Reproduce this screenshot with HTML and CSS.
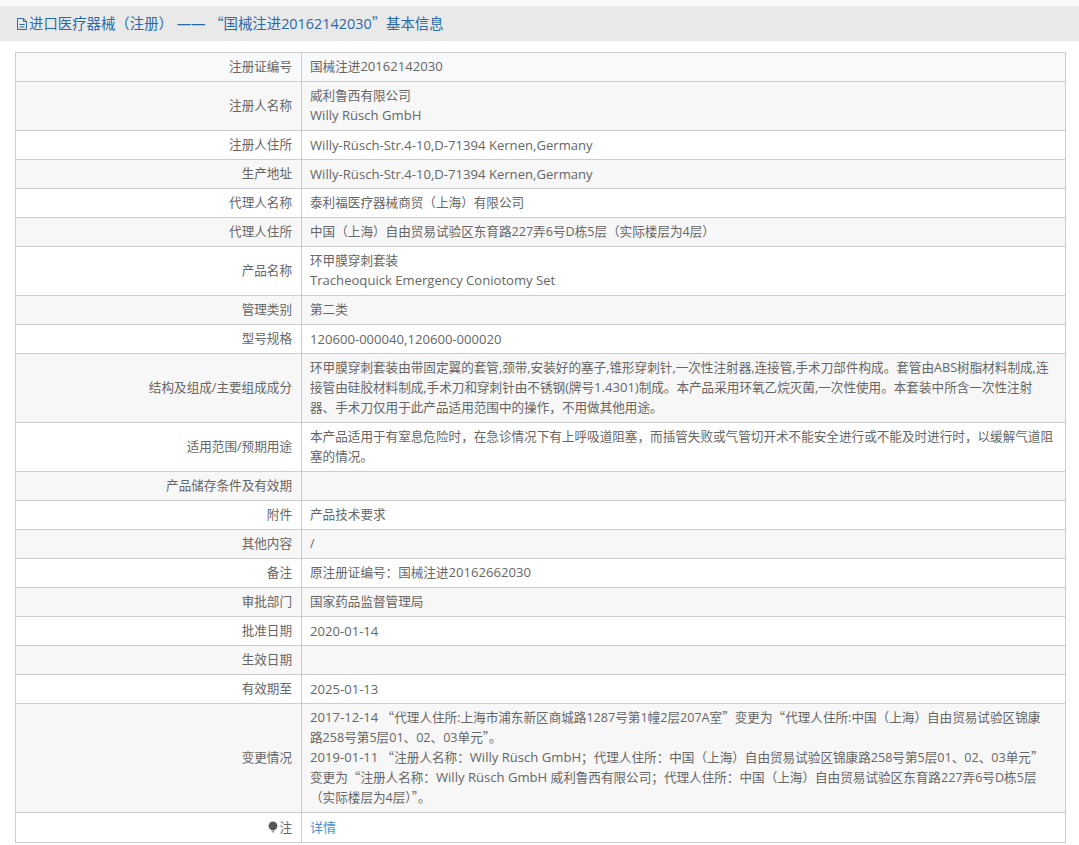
FILE: index.html
```html
<!DOCTYPE html>
<html lang="zh-CN">
<head>
    <meta charset="UTF-8">
    <title>进口医疗器械（注册）基本信息</title>
    <link rel="stylesheet" href="styles.css">
</head>
<body>

<!-- Title bar -->
<div class="pageTitle">
    <svg class="fileIcon" width="12" height="14" viewBox="0 0 12 14" fill="none" stroke="currentColor" stroke-width="1">
        <path d="M1.5 1.5h6l3 3v8h-9z"/>
        <path d="M7.5 1.5v3h3M3.5 7.5h5M3.5 10h5"/>
    </svg>
    <span>进口医疗器械（注册） —— <span class="cjk">“</span>国械注进20162142030<span class="cjk">”</span>基本信息</span>
</div>

<!-- Detail table -->
<table class="detailTable">
    <tr class="firstRow"><th>注册证编号</th><td>国械注进<span class="en">20162142030</span></td></tr>
    <tr><th>注册人名称</th><td>威利鲁西有限公司<br><span class="en">Willy Rüsch GmbH</span></td></tr>
    <tr><th>注册人住所</th><td class="en">Willy-Rüsch-Str.4-10,D-71394 Kernen,Germany</td></tr>
    <tr><th>生产地址</th><td class="en">Willy-Rüsch-Str.4-10,D-71394 Kernen,Germany</td></tr>
    <tr><th>代理人名称</th><td>泰利福医疗器械商贸（上海）有限公司</td></tr>
    <tr><th>代理人住所</th><td>中国（上海）自由贸易试验区东育路227弄6号D栋5层（实际楼层为4层）</td></tr>
    <tr><th>产品名称</th><td>环甲膜穿刺套装<br><span class="en">Tracheoquick Emergency Coniotomy Set</span></td></tr>
    <tr><th>管理类别</th><td>第二类</td></tr>
    <tr><th>型号规格</th><td class="en">120600-000040,120600-000020</td></tr>
    <tr><th>结构及组成/主要组成成分</th><td>环甲膜穿刺套装由带固定翼的套管,颈带,安装好的塞子,锥形穿刺针,一次性注射器,连接管,手术刀部件构成。套管由ABS树脂材料制成,连接管由硅胶材料制成,手术刀和穿刺针由不锈钢(牌号<span class="en">1.4301</span>)制成。本产品采用环氧乙烷灭菌,一次性使用。本套装中所含一次性注射<br>器、手术刀仅用于此产品适用范围中的操作，不用做其他用途。</td></tr>
    <tr><th>适用范围/预期用途</th><td>本产品适用于有窒息危险时，在急诊情况下有上呼吸道阻塞，而插管失败或气管切开术不能安全进行或不能及时进行时，以缓解气道阻塞的情况。</td></tr>
    <tr><th>产品储存条件及有效期</th><td></td></tr>
    <tr><th>附件</th><td>产品技术要求</td></tr>
    <tr><th>其他内容</th><td>/</td></tr>
    <tr><th>备注</th><td>原注册证编号：国械注进<span class="en">20162662030</span></td></tr>
    <tr><th>审批部门</th><td>国家药品监督管理局</td></tr>
    <tr><th>批准日期</th><td class="en">2020-01-14</td></tr>
    <tr><th>生效日期</th><td></td></tr>
    <tr><th>有效期至</th><td class="en">2025-01-13</td></tr>
    <tr><th>变更情况</th><td><span class="en">2017-12-14</span> <span class="cjk">“</span>代理人住所:上海市浦东新区商城路1287号第1幢2层207A室<span class="cjk">”</span>变更为<span class="cjk">“</span>代理人住所:中国（上海）自由贸易试验区锦康<br>路258号第5层01、02、03单元<span class="cjk">”</span>。<br><span class="en">2019-01-11</span> <span class="cjk">“</span>注册人名称：<span class="en">Willy Rüsch GmbH</span>；代理人住所：中国（上海）自由贸易试验区锦康路258号第5层01、02、03单元<span class="cjk">”</span><br>变更为<span class="cjk">“</span>注册人名称：<span class="en">Willy Rüsch GmbH</span> 威利鲁西有限公司；代理人住所：中国（上海）自由贸易试验区东育路227弄6号D栋5层<br>（实际楼层为4层）<span class="cjk">”</span>。</td></tr>
    <tr>
        <th>
            <svg class="noteIcon" width="10" height="12" viewBox="0 0 10 12">
                <circle cx="5" cy="4.8" r="4.4" fill="#555"/>
                <path d="M3.4 9.6h3.2L6 11.5H4z" fill="#999"/>
            </svg>注
        </th>
        <td><a class="detailLink" href="javascript:void(0)">详情</a></td>
    </tr>
</table>

</body>
</html>
```

FILE: styles.css
```css
html, body {
    margin: 0;
    padding: 0;
    height: 845px;
    overflow: hidden;
    background: #fff;
}

body {
    font-family: "Open Sans", "Noto Sans CJK SC", sans-serif;
    font-size: 12.6px;
    line-height: 20px;
    color: #666;
    border-top: 6px solid #f9f9f9;
    box-sizing: border-box;
}

/* Quotes use the wide CJK glyphs */
.cjk {
    font-family: "Noto Sans CJK SC", sans-serif;
    line-height: 1;
}

/* Latin runs sit a little larger than the Chinese text */
span.en {
    font-size: 13.1px;
    line-height: 1;
}

td.en {
    font-size: 13.1px;
}

/* Title bar */
.pageTitle {
    display: flex;
    align-items: center;
    height: 35px;
    padding-left: 16px;
    background: #e9e9e9;
    color: #2b6aa8;
    font-size: 14.4px;
    white-space: pre;
}

.fileIcon {
    margin-right: 1px;
}

/* Detail table */
.detailTable {
    width: 1051px;
    margin: 11px 0 0 15px;
    table-layout: fixed;
    border-collapse: collapse;
}

.detailTable th,
.detailTable td {
    padding: 4px 8px;
    border: 1px solid #ccc;
    font-weight: normal;
    vertical-align: middle;
}

.detailTable th {
    width: 268px;
    padding-right: 9px;
    text-align: right;
}

.detailTable td {
    text-align: left;
}

.detailTable tr:nth-child(even) {
    background: #f7f7f7;
}

.detailTable .firstRow {
    background: #f8f9fb;
}

.noteIcon {
    vertical-align: -1px;
    margin-right: 1px;
}

.detailLink {
    color: #4a90d0;
    text-decoration: none;
    font-size: 13px;
}
```
